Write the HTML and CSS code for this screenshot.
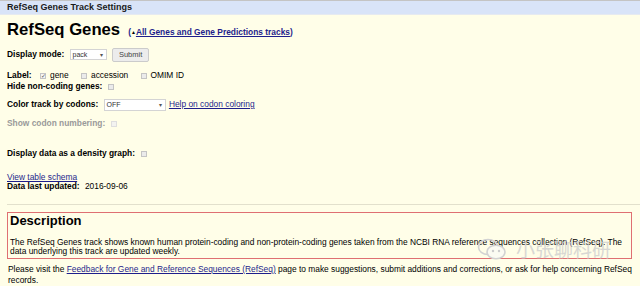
FILE: index.html
```html
<!DOCTYPE html>
<html>
  <head>
    <title>RefSeq Genes Track Settings</title>
    <link rel="stylesheet" href="styles.css">
  </head>
  <body>
    <div class="titlebar">RefSeq Genes Track Settings</div>
    <div class="content">
      <div class="heading">
        <h1>RefSeq Genes</h1>
        <span class="crumb">(<span class="tri">&#9650;</span><a href="#">All Genes and Gene Predictions tracks</a>)</span>
      </div>

      <div class="row mode">
        <b>Display mode:</b>
        <span class="select small">pack<i>&#9662;</i></span>
        <span class="button">Submit</span>
      </div>

      <div class="row label-row">
        <b>Label:</b>
        <span class="box checked">&#10003;</span>gene
        <span class="box spaced"></span>accession
        <span class="box spaced"></span>OMIM ID
      </div>
      <div class="row">
        <b>Hide non-coding genes:</b><span class="box"></span>
      </div>

      <div class="row codons">
        <b>Color track by codons:</b>
        <span class="select wide">OFF<i>&#9662;</i></span>
        <a href="#">Help on codon coloring</a>
      </div>

      <div class="row numbering">
        <b>Show codon numbering:</b><span class="box faint"></span>
      </div>

      <div class="row density">
        <b>Display data as a density graph:</b><span class="box"></span>
      </div>

      <div class="row schema"><a href="#">View table schema</a></div>
      <div class="row updated"><b>Data last updated:</b> 2016-09-06</div>
    </div>

    <hr class="rule">

    <div class="desc">
      <h2>Description</h2>
      <p>The RefSeq Genes track shows known human protein-coding and non-protein-coding genes taken from the NCBI RNA reference sequences collection (RefSeq). The data underlying this track are updated weekly.</p>
    </div>

    <p class="visit">Please visit the <a href="#">Feedback for Gene and Reference Sequences (RefSeq)</a> page to make suggestions, submit additions and corrections, or ask for help concerning RefSeq records.</p>

    <div class="watermark">
      <svg width="30" height="22" viewBox="0 0 30 22">
        <ellipse cx="11" cy="9" rx="9.5" ry="7.5" fill="none" stroke="#d2d2d2" stroke-width="1.6"/>
        <ellipse cx="19" cy="14" rx="9" ry="6.8" fill="#fbfbf2" stroke="#d2d2d2" stroke-width="1.6"/>
        <circle cx="16" cy="13" r="1.2" fill="#cccccc"/>
        <circle cx="22" cy="13" r="1.2" fill="#cccccc"/>
      </svg>
      <span class="mark-text">小张聊科研</span>
    </div>
  </body>
</html>
```

FILE: styles.css
```css
body {
  margin: 0;
  background-color: #fffee8;
  font-family: "Liberation Sans", Arial, sans-serif;
  font-size: 8.4px;
  color: #000;
  position: relative;
  overflow: hidden;
  height: 286px;
}

a {
  color: #1e1e8c;
}

.titlebar {
  height: 13px;
  line-height: 13px;
  border-top: 1px solid #c4c4c4;
  border-bottom: 1px solid #e6eaf0;
  background-color: #d9e4f8;
  padding-left: 7px;
  font-weight: bold;
  font-size: 9px;
  color: #1a1a1a;
}

.content {
  padding: 0 7px;
}

.heading {
  display: flex;
  align-items: baseline;
  margin-top: 5px;
}

h1 {
  margin: 0;
  font-size: 16.7px;
  line-height: 20px;
  font-weight: bold;
}

.crumb {
  margin-left: 8px;
  font-weight: bold;
  color: #1e1e8c;
}

.tri {
  font-size: 5px;
  color: #000;
  vertical-align: 1px;
}

.row {
  height: 11px;
  line-height: 11px;
  white-space: nowrap;
}

.row b {
  margin-right: 3px;
}

.mode {
  margin-top: 7px;
  height: 14px;
  line-height: 14px;
}

.label-row {
  margin-top: 9px;
}

.select {
  display: inline-flex;
  align-items: center;
  justify-content: space-between;
  box-sizing: border-box;
  height: 11px;
  padding: 0 3px 0 2px;
  background-color: #fff;
  border: 1px solid #d4d4d4;
  font-size: 7px;
  color: #333;
  vertical-align: middle;
}

.select i {
  font-style: normal;
  font-size: 6px;
  color: #555;
}

.small {
  width: 37px;
}

.wide {
  width: 62px;
  margin-right: 1px;
  height: 12px;
}

.button {
  display: inline-block;
  box-sizing: border-box;
  margin-left: 3px;
  height: 14px;
  line-height: 12px;
  padding: 0 6px;
  background-color: #ececec;
  border: 1px solid #cbcbcb;
  border-radius: 2px;
  font-size: 7.5px;
  color: #444;
  vertical-align: middle;
}

.box {
  display: inline-block;
  box-sizing: border-box;
  width: 6px;
  height: 6px;
  margin: 0 4px 0 3px;
  border: 1px solid #c4c4c4;
  background-color: #ebebeb;
  font-size: 6px;
  line-height: 4px;
  text-align: center;
  color: #555;
  vertical-align: middle;
  overflow: visible;
}

.box.spaced {
  margin-left: 10px;
}

.box.checked {
  background-color: #f4f4f4;
}

.box.faint {
  border-color: #dedede;
  background-color: #f3f3f0;
}

.codons {
  margin-top: 6px;
  height: 12px;
  line-height: 12px;
}

.numbering {
  margin-top: 8px;
  color: #9a9a9a;
}

.density {
  margin-top: 19px;
}

.schema {
  margin-top: 14px;
  height: 9px;
  line-height: 9px;
}

.updated {
  height: 9px;
  line-height: 9px;
}

.rule {
  margin: 13px 0 0 7px;
  border: 0;
  border-top: 1px solid #e2e0cc;
  height: 0;
}

.desc {
  margin: 7px 8px 0 7px;
  padding: 0 3px 2px 2px;
  border: 1px solid #df6f72;
}

h2 {
  margin: 0 0 10px;
  font-size: 13px;
  line-height: 15px;
}

.desc p {
  margin: 0;
  line-height: 9px;
}

.visit {
  margin: 5px 0 0 8px;
  padding-right: 6px;
  line-height: 11px;
}

.watermark {
  position: absolute;
  left: 477px;
  top: 236px;
  width: 150px;
  display: flex;
  align-items: center;
  gap: 9px;
  white-space: nowrap;
}

.mark-text {
  font-family: "Noto Sans CJK SC", "Noto Sans CJK JP", sans-serif;
  font-size: 19px;
  line-height: 26px;
  color: #cfcfcf;
  opacity: 0.8;
}
```
